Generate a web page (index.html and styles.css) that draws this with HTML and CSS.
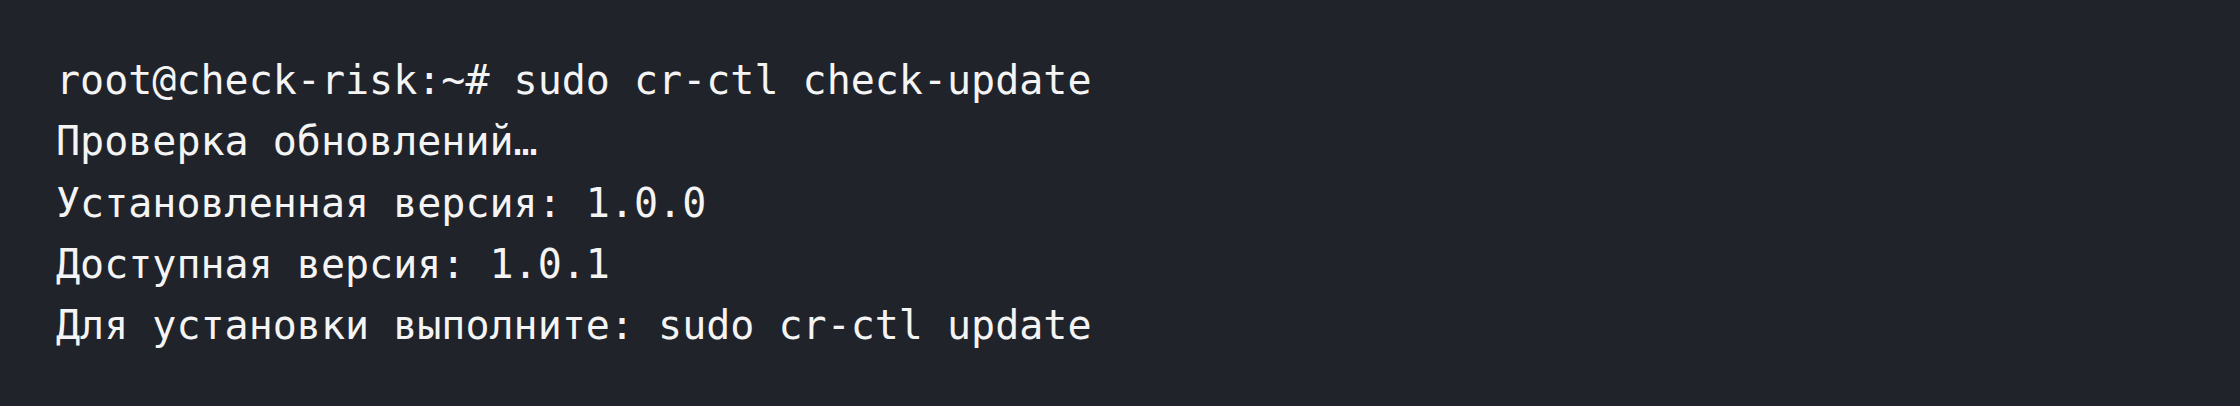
FILE: index.html
```html
<!DOCTYPE html>
<html lang="ru">
<head>
<meta charset="utf-8">
<link rel="stylesheet" href="styles.css">
</head>
<body>
<pre class="terminal"><code><span class="line">root@check-risk:~# sudo cr-ctl check-update</span>
<span class="line">Проверка обновлений…</span>
<span class="line">Установленная версия: 1.0.0</span>
<span class="line">Доступная версия: 1.0.1</span>
<span class="line">Для установки выполните: sudo cr-ctl update</span></code></pre>
</body>
</html>
```
FILE: styles.css
```css
html, body {
  margin: 0;
  padding: 0;
  background: #21232b;
}
.terminal {
  margin: 0;
  box-sizing: border-box;
  width: 2240px;
  height: 406px;
  padding: 50px 56px 0 56px;
  background: #21232b;
  color: #f4f4f4;
  font-family: "DejaVu Sans Mono", monospace;
  font-size: 40px;
  line-height: 61.25px;
  white-space: pre;
}
.terminal code {
  font: inherit;
}
```
